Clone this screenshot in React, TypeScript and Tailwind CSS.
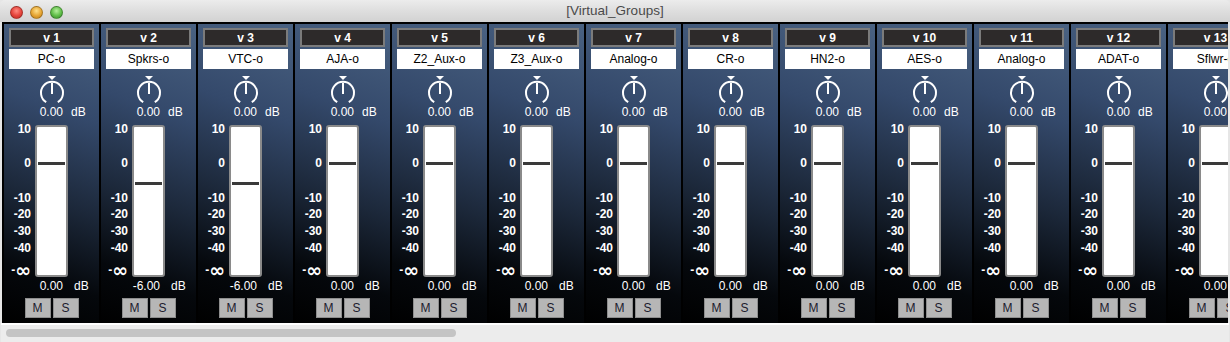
import type { ReactNode } from "react";

type Channel = { id: number; name: string; level: "0" | "-6" };

const channels: Channel[] = [
	{ id: 1, name: "PC-o", level: "0" },
	{ id: 2, name: "Spkrs-o", level: "-6" },
	{ id: 3, name: "VTC-o", level: "-6" },
	{ id: 4, name: "AJA-o", level: "0" },
	{ id: 5, name: "Z2_Aux-o", level: "0" },
	{ id: 6, name: "Z3_Aux-o", level: "0" },
	{ id: 7, name: "Analog-o", level: "0" },
	{ id: 8, name: "CR-o", level: "0" },
	{ id: 9, name: "HN2-o", level: "0" },
	{ id: 10, name: "AES-o", level: "0" },
	{ id: 11, name: "Analog-o", level: "0" },
	{ id: 12, name: "ADAT-o", level: "0" },
	{ id: 13, name: "Sflwr-o", level: "0" },
];

// tick labels beside the fader, top offsets relative to the fader box
const ticks: { label: ReactNode; className: string }[] = [
	{ label: "10", className: "top-[-3px]" },
	{ label: "0", className: "top-[31px]" },
	{ label: "-10", className: "top-[66px]" },
	{ label: "-20", className: "top-[82px]" },
	{ label: "-30", className: "top-[99px]" },
	{ label: "-40", className: "top-[116px]" },
	{
		label: (
			<span className="flex h-[14px] items-center">
				-
				<span className="font-['DejaVu_Sans',sans-serif] text-[19px] leading-[14px] font-bold">
					∞
				</span>
			</span>
		),
		className: "top-[138px]",
	},
];

function TrafficLight({ className }: { className: string }) {
	return (
		<span
			className={`size-[13px] rounded-full border border-black/25 ${className}`}
		/>
	);
}

function Knob() {
	return (
		<svg width="30" height="29" viewBox="0 0 30 29" className="mx-auto block">
			<polygon points="11,0 19,0 15,4" fill="#fff" />
			<path
				d="M 9.2 26.2 A 11 11 0 1 1 20.8 26.2"
				fill="none"
				stroke="#fff"
				strokeWidth="2"
			/>
			<line x1="15" y1="7" x2="15" y2="18" stroke="#fff" strokeWidth="2" />
		</svg>
	);
}

function ChannelStrip({ channel }: { channel: Channel }) {
	const value = channel.level === "0" ? "0.00" : "-6.00";

	return (
		<div className="w-[97px] shrink-0 border-l-2 border-black">
			<div className="flex h-[299px] flex-col bg-[linear-gradient(200deg,#4a6282_0%,#34496b_30%,#1c283a_58%,#05080c_82%,#000_100%)] px-[5px] pt-[4px]">
				<div className="flex h-[19px] items-center justify-center border-2 border-[#7b7b7b] bg-[#2d2a2a] text-[12px] font-bold leading-none text-white">
					v {channel.id}
				</div>

				<div className="mt-[2px] flex h-[20px] items-center justify-center bg-white text-[12px] leading-none whitespace-nowrap text-black">
					{channel.name}
				</div>

				<div className="mt-[7px]">
					<Knob />
				</div>

				<div className="flex h-[14px] items-center text-[12px] leading-none text-white">
					<span className="w-[54px] text-right">0.00</span>
					<span className="ml-[8px]">dB</span>
				</div>

				<div className="relative mt-[6px] flex h-[152px] justify-center">
					<div className="absolute top-0 left-0 h-full w-[22px] text-[12px] font-bold leading-[14px] text-white">
						{ticks.map((tick, index) => (
							<span key={index} className={`absolute right-0 ${tick.className}`}>
								{tick.label}
							</span>
						))}
					</div>

					<div className="relative h-[152px] w-[33px] rounded-[3px] border-2 border-[#8a8a8a] bg-white">
						<div
							className={`absolute right-[1px] left-[1px] h-[3px] bg-[#3a3a3a] ${
								channel.level === "0" ? "top-[35px]" : "top-[55px]"
							}`}
						/>
					</div>
				</div>

				<div className="mt-[2px] flex h-[14px] items-center text-[12px] leading-none text-white">
					<span className="w-[54px] text-right">{value}</span>
					<span className="ml-[11px]">dB</span>
				</div>

				<div className="mt-[5px] flex justify-center gap-[2px]">
					<button className="flex h-[20px] w-[26px] items-center justify-center border border-[#8e8e8e] bg-[#b6b6b6] text-[12px] leading-none text-[#1c1c2e]">
						M
					</button>
					<button className="flex h-[20px] w-[26px] items-center justify-center border border-[#8e8e8e] bg-[#b6b6b6] text-[12px] leading-none text-[#1c1c2e]">
						S
					</button>
				</div>
			</div>
		</div>
	);
}

export default function App() {
	return (
		<div className="flex h-[342px] w-[1230px] flex-col overflow-hidden bg-[#e6e6e6] font-['Liberation_Sans',Arial,sans-serif]">
			<div className="relative flex h-[22px] shrink-0 items-center rounded-t-[5px] bg-[linear-gradient(180deg,#ececec_0%,#dedede_50%,#d2d2d2_100%)] pt-[2px]">
				<div className="flex items-center gap-[7px] pl-[10px]">
					<TrafficLight className="bg-[radial-gradient(circle_at_50%_35%,#ff8a80_0%,#e5433b_55%,#b52a22_100%)]" />
					<TrafficLight className="bg-[radial-gradient(circle_at_50%_35%,#ffe08a_0%,#e6a533_55%,#b97a16_100%)]" />
					<TrafficLight className="bg-[radial-gradient(circle_at_50%_35%,#b5ef9c_0%,#5fbd47_55%,#35872a_100%)]" />
				</div>
				<div className="absolute inset-0 flex items-center justify-center text-[13.5px] text-[#4a4a4a]">
					[Virtual_Groups]
				</div>
			</div>

			<div className="mx-[2px] flex shrink-0 overflow-hidden border-t-2 border-black bg-black">
				{channels.map((channel) => (
					<ChannelStrip key={channel.id} channel={channel} />
				))}
			</div>

			<div className="mx-[1px] flex flex-1 items-start border-t-2 border-white bg-[#ececec] pt-[4px] pl-[5px]">
				<div className="h-[8px] w-[450px] rounded-full bg-[#c4c4c4]" />
			</div>
		</div>
	);
}
